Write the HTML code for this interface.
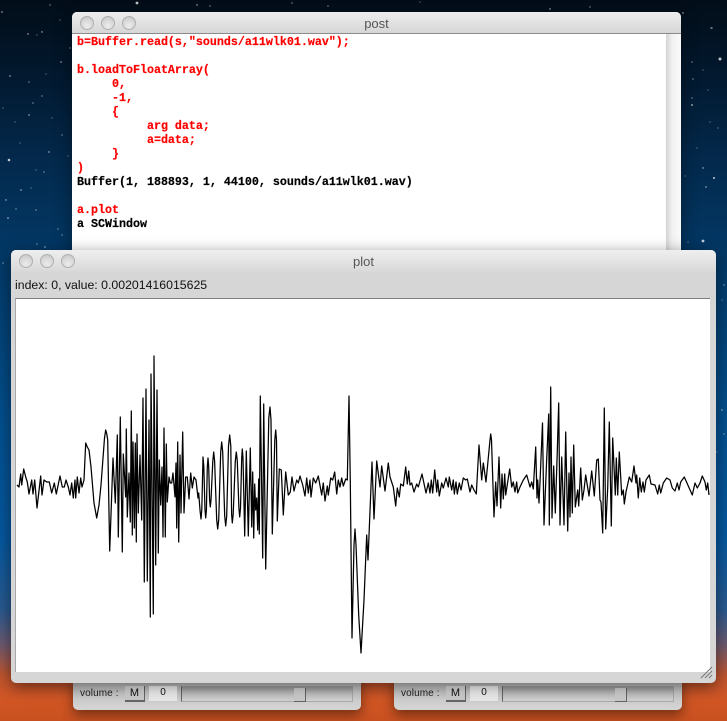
<!DOCTYPE html>
<html><head><meta charset="utf-8">
<style>
html,body{margin:0;padding:0}
body{width:727px;height:721px;overflow:hidden;position:relative;background:linear-gradient(to bottom,#020d18 0,#02162a 60px,#03294c 160px,#033d6e 280px,#03508f 420px,#0558a0 540px,#2a5a90 610px,#6e5a70 645px,#c0552f 675px,#d25624 700px,#c85020 721px);font-family:"Liberation Sans",sans-serif}
.a{position:absolute}
.win{position:absolute;box-sizing:border-box;box-shadow:0 6px 18px rgba(0,0,0,.4)}
.lt{position:absolute;width:14px;height:14px;border-radius:50%;box-sizing:border-box;border:1px solid #b0b0b0;background:radial-gradient(circle at 50% 75%,#ececec 0,#d8d8d8 55%,#c0c0c0 100%);}
.code{position:absolute;left:77px;top:35px;margin:0;font:bold 11.67px/14px "Liberation Mono",monospace;color:#f00;white-space:pre;-webkit-text-stroke:.2px currentColor;filter:blur(.25px)}
.code b{color:#000}
.panel{position:absolute;top:675px;width:288px;height:35px;background:linear-gradient(#c4c4c4,#d4d4d4);border-radius:0 0 5px 5px;box-shadow:0 5px 12px rgba(0,0,0,.45)}
.vol{position:absolute;left:7px;top:13px;font-size:10px;color:#222;letter-spacing:.1px;filter:blur(.25px)}
.m{position:absolute;left:52px;top:11px;width:20px;height:16px;box-sizing:border-box;background:linear-gradient(#e8e8e8,#c8c8c8);border-right:1px solid #666;border-bottom:2px solid #666;font-size:11px;line-height:15px;text-align:center;color:#111;filter:blur(.2px)}
.f{position:absolute;left:76px;top:11px;width:28px;height:15px;background:linear-gradient(#fff,#e8e8e8);font-size:10px;line-height:14px;text-align:center;color:#111}
.s{position:absolute;left:108px;top:11px;width:172px;height:16px;box-sizing:border-box;border:1px solid #aaa;border-left-color:#666;background:linear-gradient(#a4a4a4,#c4c4c4 50%,#d4d4d4)}
.t{position:absolute;left:112px;top:1px;width:12px;height:14px;box-sizing:border-box;background:linear-gradient(#dedede,#c8c8c8);border-right:1px solid #666;border-bottom:1px solid #666}
</style></head><body>

<svg class="a" style="left:0;top:0;filter:blur(.3px)" width="727" height="721" fill="#fff">
<g opacity=".75">
<circle cx="137" cy="3" r="1.4"/><circle cx="197" cy="5" r=".7"/><circle cx="210" cy="6" r=".6"/><circle cx="50" cy="5" r=".6"/><circle cx="2" cy="12" r=".7"/><circle cx="292" cy="3" r=".6"/><circle cx="328" cy="6" r=".6"/><circle cx="550" cy="9" r=".7"/><circle cx="590" cy="7" r=".6"/><circle cx="420" cy="2" r=".5"/><circle cx="683" cy="13" r=".7"/><circle cx="712" cy="28" r=".6"/>
<circle cx="9" cy="160" r="1.3"/><circle cx="28" cy="34" r=".7"/><circle cx="42" cy="32" r=".7"/><circle cx="42" cy="96" r=".6"/><circle cx="10" cy="76" r=".7"/><circle cx="29" cy="82" r=".6"/><circle cx="46" cy="74" r=".5"/><circle cx="61" cy="62" r=".7"/><circle cx="33" cy="103" r=".6"/><circle cx="29" cy="115" r=".7"/><circle cx="15" cy="122" r=".5"/><circle cx="62" cy="135" r=".6"/><circle cx="49" cy="152" r=".7"/><circle cx="36" cy="170" r=".5"/><circle cx="44" cy="172" r=".6"/><circle cx="21" cy="190" r=".7"/><circle cx="31" cy="188" r=".5"/><circle cx="6" cy="200" r=".7"/><circle cx="16" cy="209" r=".6"/><circle cx="8" cy="218" r=".8"/><circle cx="36" cy="210" r=".6"/><circle cx="58" cy="229" r=".6"/><circle cx="62" cy="235" r=".6"/><circle cx="37" cy="35" r=".5"/><circle cx="70" cy="48" r=".6"/><circle cx="60" cy="20" r=".5"/><circle cx="3" cy="108" r=".5"/><circle cx="20" cy="143" r=".5"/><circle cx="52" cy="118" r=".5"/><circle cx="68" cy="156" r=".5"/><circle cx="45" cy="247" r=".7"/><circle cx="37" cy="244" r=".6"/>
<circle cx="720" cy="59" r="1.5"/><circle cx="711" cy="28" r=".6"/><circle cx="692" cy="62" r=".6"/><circle cx="703" cy="70" r=".5"/><circle cx="693" cy="79" r=".6"/><circle cx="708" cy="90" r=".5"/><circle cx="692" cy="98" r=".6"/><circle cx="692" cy="105" r=".9"/><circle cx="710" cy="122" r=".5"/><circle cx="718" cy="128" r=".5"/><circle cx="697" cy="148" r=".5"/><circle cx="703" cy="168" r=".7"/><circle cx="714" cy="178" r="1"/><circle cx="706" cy="187" r=".7"/><circle cx="685" cy="176" r=".5"/><circle cx="703" cy="241" r="1.4"/><circle cx="688" cy="242" r=".5"/><circle cx="724" cy="285" r=".6"/><circle cx="722" cy="300" r=".5"/><circle cx="722" cy="410" r=".7"/><circle cx="724" cy="434" r=".6"/><circle cx="717" cy="452" r=".5"/><circle cx="3" cy="263" r=".6"/>
</g>
</svg>

<!-- volume panels behind -->
<div class="panel" style="left:73px"><div class="vol">volume :</div><div class="m">M</div><div class="f">0</div><div class="s"><div class="t"></div></div></div>
<div class="panel" style="left:394px"><div class="vol">volume :</div><div class="m">M</div><div class="f">0</div><div class="s"><div class="t"></div></div></div>

<!-- post window -->
<div class="win" style="left:72px;top:12px;width:609px;height:300px;background:#fff;border-radius:5px 5px 0 0">
  <div class="a" style="left:0;top:0;width:609px;height:22px;border-radius:5px 5px 0 0;box-sizing:border-box;background:linear-gradient(#eeeeee,#d6d6d6);border-bottom:1px solid #8c8c8c"></div>
  <div class="a" style="left:594px;top:22px;width:15px;height:278px;background:linear-gradient(to right,#d4d4d4,#f0f0f0 40%,#fbfbfb)"></div>
  <div class="a" style="left:0;top:3px;width:609px;text-align:center;font-size:13px;line-height:17px;color:#555">post</div>
</div>
<div class="lt" style="left:80px;top:16px"></div><div class="lt" style="left:101px;top:16px"></div><div class="lt" style="left:122px;top:16px"></div>
<pre class="code">b=Buffer.read(s,"sounds/a11wlk01.wav");

b.loadToFloatArray(
     0,
     -1,
     {
          arg data;
          a=data;
     }
)
<b>Buffer(1, 188893, 1, 44100, sounds/a11wlk01.wav)</b>

a.plot
<b>a SCWindow</b></pre>

<!-- plot window -->
<div class="win" style="left:11px;top:250px;width:705px;height:433px;background:#d6d6d6;border-radius:5px;box-shadow:0 4px 16px rgba(0,0,0,.5)">
  <div class="a" style="left:0;top:0;width:705px;height:24px;border-radius:5px 5px 0 0;background:linear-gradient(#efefef,#d6d6d6)"></div>
  <div class="a" style="left:0;top:3px;width:705px;text-align:center;font-size:13px;line-height:17px;color:#555">plot</div>
  <div class="a" style="left:4px;top:28px;font-size:12.3px;line-height:15px;color:#111;white-space:nowrap;filter:blur(.2px)">index: 0, value: 0.00201416015625</div>
  <div class="a" style="left:4px;top:48px;width:695px;height:374px;box-sizing:border-box;background:#fff;border-top:1px solid #808080;border-left:1px solid #a8a8a8"></div>
</div>
<div class="lt" style="left:19px;top:254px"></div><div class="lt" style="left:40px;top:254px"></div><div class="lt" style="left:61px;top:254px"></div>

<svg class="a" style="left:0;top:0" width="727" height="721">
<polyline style="filter:blur(.25px)" fill="none" stroke="#000" stroke-width="1.25" stroke-linejoin="round" points="17,485 19,487 20.7,474 21.7,485 23.7,469 25.7,477 27.3,482 29,494 31.7,480 33,494 34.7,480 37,508 40.7,476 42,495 44,480 46.7,482 49.3,482 51.7,493 54.3,483 56.3,494 60,476 62.3,487 64.3,487 66,480 68.3,487 70,495 71.7,483 73.3,498 75,480 75.7,498 77.3,477 79,493 80.7,478 82,487 84,480 85.7,443 87.3,447 89,450 91,467 94,503 96.7,518 99,505 101,485 104.5,438 105.7,430 106.8,434 107.7,440 109.7,551 113,458 115.3,503 117.3,435 118.3,537 120.3,417 122.3,552 123.3,454 125.7,497 126.3,429 127.3,517 129,473 130.3,522 131.3,411 132.3,535 133,442 134.3,528 135.3,443 136.3,542 137,434 138.3,513 140,455 141.7,520 143,398 144.3,582 146,389 147.3,581 149,420 150.3,617 151,374 153.3,614 154,356 155.7,565 157,390 158.3,553 159.3,460 160.7,505 162,467 163,537 164,428 165.3,537 166.3,444 167.3,502 169,477 170.3,483 171.7,483 173,473 175,497 176,463 176.7,528 177.7,442 178.7,542 180,455 181,513 182.7,432 184,513 185.7,477 187.3,477 189,499 190.7,473 192.3,488 194,477 196,480 198,498 198.7,493 200,510 201,519 201.8,510 203,457 203.8,466 205,510 205.7,518 206.4,510 207.3,467 208,458 208.7,467 209.6,500 210.3,507 211,500 212.8,461 213.7,452 214.6,461 216.7,520 217.7,529 218.7,520 220.7,452 221.7,442 222.7,452 224.7,516 225.7,526 226.7,516 228.5,446 229.7,435 230.8,446 231.6,514 232.3,523 233.2,514 235.3,461 236.3,452 237.3,461 238.9,508 239.7,517 240.5,508 241.7,458 242.3,449 243,458 244.7,536 246.3,451 248.3,536 250.3,448 251.7,527 252.7,472 253.7,538 254.7,484 255.7,510 256.7,498 257.7,530 258.7,479 259.3,534 260.3,396 262.7,558 263.7,404 265.7,569 268.8,418 270,407 271,420 272.3,534 274.8,440 275.7,430 276.5,440 277.3,521 279.3,469 281.3,470 283.3,515 285.7,472 288.3,495 290.3,492 292,477 294,491 296.7,480 298.3,483 300,476 302.7,485 305,496 306.7,478 308.3,493 310,480 311,497 313.3,478 315.7,483 318.3,476 321.7,495 323.3,483 325,501 327.3,486 328.3,495 330.7,478 332.7,480 334.7,472 336.7,494 338.3,480 340,487 341.7,478 343.3,486 345.7,479 347.3,480 349,396 350.3,482 352,638 354,545 355,529 356,545 358.7,615 361,653 364,600 366.7,535 368,560 372,462 374,519 376.7,461 380,487 381.7,466 385,491 388.3,463 390,477 393.3,487 395.7,506 397.3,488 399.3,497 400.7,484 403.3,486 405.7,467 407.3,484 408.7,471 410,485 411.7,483 414,492 416.7,484 418.3,487 422,474 426,493 428.3,483 430,493 431.3,480 432.7,493 434.7,470 436.7,492 437.7,480 439.3,496 441.7,483 443.3,488 446,478 448.3,487 449.3,477 451.7,490 453.3,480 454.3,494 456,482 457.3,494 459.3,483 461,490 463.3,478 465.7,480 467.3,479 470,492 471.7,485 474,490 476.3,494 479,445 481.7,480 483.3,463 486,482 490,440 490.7,434 491.5,440 494,517 495.7,482 497,506 499,457 500.7,508 502,474 503.3,499 504.7,474 505.7,495 509.7,469 511.7,487 513.3,482 515,492 516.7,482 517.7,493 520,487 523.3,480 526.7,475 530,487 531.7,482 533.3,489 535.7,447 537,498 537.7,480 539,503 540,482 542.5,423 544,525 546.7,459 548.7,414 549.3,525 550.7,387 552,518 553.7,466 555.3,513 557.3,451 558.7,403 560,525 561.7,457 564,525 565.7,432 567.7,531 569,473 570,517 571,457 572.3,513 573.7,445 575.3,507 577.7,490 578.7,506 580.7,468 582.3,500 584,490 585.7,475 589,496 591.7,471 594.3,496 596.7,460 598.3,459 600,500 601,502 602.7,533 604.3,408 605.7,529 607.7,488 609.3,422 611.3,526 612.7,438 615.3,495 616.3,458 617.7,495 619.3,452 621.7,495 623.3,490 624.3,504 626,492 629.3,477 631.7,482 634,466 636,483 636.7,475 638.3,498 639.7,478 641.3,492 643,482 644.3,492 646,480 649.3,475 651,484 655,485 657.7,494 659.3,485 660.7,493 663.3,483 666.7,478 670,480 672.3,488 675,491 677.3,483 679,490 680.7,482 684.3,477 688.3,486 692.3,495 695,483 697.3,488 700,483 702.3,476 705,482 706.3,490 707.7,483 709,495"/>
<g stroke="#777" stroke-width="1"><path d="M701 678L712 667M705 678L712 671M709 678L712 675"/></g>
</svg>
</body></html>
